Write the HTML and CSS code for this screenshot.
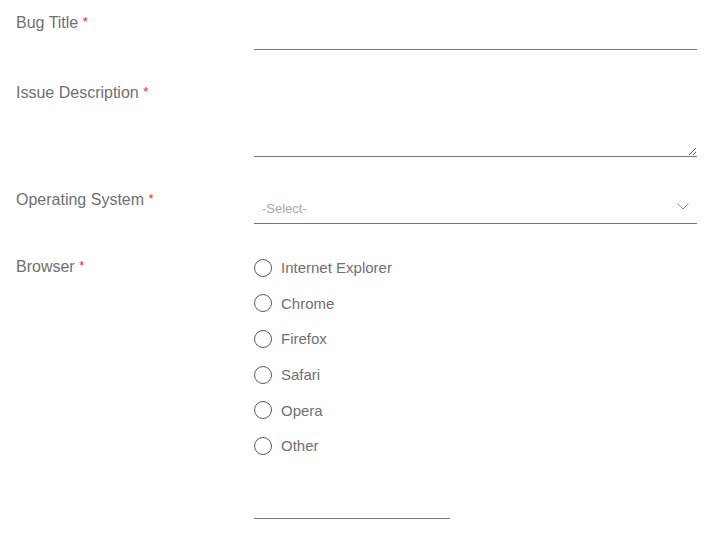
FILE: index.html
```html
<!DOCTYPE html>
<html lang="en">
<head>
<meta charset="utf-8">
<title>Bug Report</title>
<link rel="stylesheet" href="styles.css">
</head>
<body>
<form class="form">
  <div class="row row-first">
    <label class="label" for="title">Bug Title <span class="req">*</span></label>
    <input class="text-input" id="title" type="text">
  </div>
  <div class="row">
    <label class="label" for="desc">Issue Description <span class="req">*</span></label>
    <textarea class="textarea" id="desc"></textarea>
  </div>
  <div class="row">
    <label class="label">Operating System <span class="req">*</span></label>
    <div class="select">
      <span class="select-text">-Select-</span>
      <svg class="chevron" width="12" height="7" viewBox="0 0 12 7"><path d="M0.5 0.5 L6 6 L11.5 0.5" fill="none" stroke="#8a8a8a" stroke-width="1"/></svg>
    </div>
  </div>
  <div class="row">
    <label class="label">Browser <span class="req">*</span></label>
    <div class="radios">
      <label class="radio"><span class="circle"></span>Internet Explorer</label>
      <label class="radio"><span class="circle"></span>Chrome</label>
      <label class="radio"><span class="circle"></span>Firefox</label>
      <label class="radio"><span class="circle"></span>Safari</label>
      <label class="radio"><span class="circle"></span>Opera</label>
      <label class="radio"><span class="circle"></span>Other</label>
      <input class="other-input" type="text">
    </div>
  </div>
</form>
</body>
</html>
```
FILE: styles.css
```css
html, body {
  margin: 0;
  background: #fff;
}
body {
  font-family: "Liberation Sans", sans-serif;
  color: #707070;
}
.form {
  padding: 0 30px 0 16px;
}
.row {
  display: grid;
  grid-template-columns: 238px 1fr;
  margin-top: 20px;
}
.row-first {
  margin-top: 0;
}
.label {
  font-size: 16px;
  line-height: 18px;
  padding-top: 13px;
  color: #707070;
}
.req {
  color: #f0262a;
  font-size: 13px;
  vertical-align: 2px;
}
.text-input {
  margin: 18px 0 0 0;
  height: 32px;
  box-sizing: border-box;
  border: none;
  border-bottom: 1px solid #777;
  padding: 0 8px;
  font: inherit;
  outline: none;
  width: 100%;
}
.textarea {
  margin: 13px 0 0 0;
  height: 74px;
  box-sizing: border-box;
  border: none;
  border-bottom: 1px solid #777;
  padding: 4px 8px;
  font: inherit;
  outline: none;
  resize: vertical;
  width: 100%;
  display: block;
}
.select {
  margin-top: 16px;
  height: 31px;
  box-sizing: border-box;
  border-bottom: 1px solid #777;
  display: flex;
  align-items: center;
  justify-content: space-between;
  padding: 0 8px 0 8px;
}
.select-text {
  font-size: 13px;
  color: #a8a8a8;
  padding-top: 1px;
}
.chevron {
  margin-top: -4px;
}
.radios {
  margin-top: 6px;
  display: flex;
  flex-direction: column;
}
.radio {
  height: 35.6px;
  display: flex;
  align-items: center;
  font-size: 15px;
  color: #707070;
}
.circle {
  width: 18px;
  height: 18px;
  box-sizing: border-box;
  border: 1px solid #5a5a5a;
  border-radius: 50%;
  margin-right: 9px;
}
.other-input {
  margin: 24px 0 0 0;
  width: 196px;
  height: 31px;
  box-sizing: border-box;
  border: none;
  border-bottom: 1px solid #777;
  outline: none;
  font: inherit;
}
```
